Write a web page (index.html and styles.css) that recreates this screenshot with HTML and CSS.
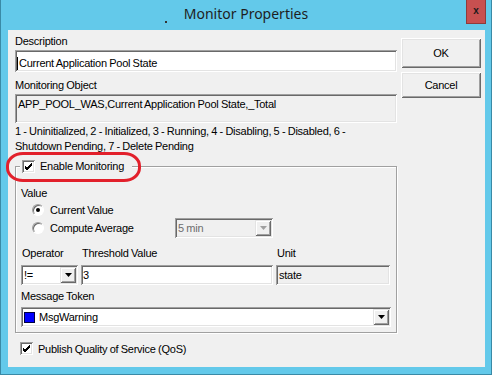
FILE: index.html
```html
<!DOCTYPE html>
<html lang="en">
<head>
  <meta charset="UTF-8" />
  <title>Monitor Properties</title>
  <link rel="stylesheet" href="styles.css">
</head>
<body>
  <div class="window">
    <div class="titlebar">
      <span class="app-dot"></span>
      <span class="title">Monitor Properties</span>
      <span class="close">x</span>
    </div>

    <div class="client">
      <div class="main">
        <div class="label">Description</div>
        <div class="field edit"><span class="caret"></span>Current Application Pool State</div>

        <div class="label second">Monitoring Object</div>
        <div class="field readonly tall">APP_POOL_WAS,Current Application Pool State,_Total</div>

        <p class="states">1 - Uninitialized, 2 - Initialized, 3 - Running, 4 - Disabling, 5 - Disabled, 6 -<br>Shutdown Pending, 7 - Delete Pending</p>

        <div class="group">
          <div class="group-head">
            <span class="check on">
              <svg width="13" height="13" viewBox="0 0 13 13"><path d="M3 6l2 2 5-5M3 7l2 2 5-5M3 8l2 2 5-5" fill="none" stroke="#000" stroke-width="1"/></svg>
            </span>
            <span>Enable Monitoring</span>
            <span class="mark"></span>
          </div>

          <div class="label value-label">Value</div>
          <div class="radio-row first">
            <span class="option"><span class="radio on"></span>Current Value</span>
          </div>
          <div class="radio-row">
            <span class="option"><span class="radio"></span>Compute Average</span>
            <div class="field combo disabled">
              <span class="combo-text">5 min</span>
              <span class="drop"><svg width="7" height="4" viewBox="0 0 7 4"><path d="M0 0h7L3.5 4z" fill="#a0a0a0"/></svg></span>
            </div>
          </div>

          <div class="threshold">
            <div class="label cell">Operator</div>
            <div class="label cell">Threshold Value</div>
            <div class="label cell">Unit</div>
            <div class="field combo">
              <span class="combo-text">!=</span>
              <span class="drop"><svg width="7" height="4" viewBox="0 0 7 4"><path d="M0 0h7L3.5 4z" fill="#000"/></svg></span>
            </div>
            <div class="field edit small">3</div>
            <div class="field readonly small">state</div>
          </div>

          <div class="label token-label">Message Token</div>
          <div class="field combo token">
            <span class="combo-text"><span class="swatch"></span>MsgWarning</span>
            <span class="drop"><svg width="7" height="4" viewBox="0 0 7 4"><path d="M0 0h7L3.5 4z" fill="#000"/></svg></span>
          </div>
        </div>

        <div class="qos">
          <span class="check on">
            <svg width="13" height="13" viewBox="0 0 13 13"><path d="M3 6l2 2 5-5M3 7l2 2 5-5M3 8l2 2 5-5" fill="none" stroke="#000" stroke-width="1"/></svg>
          </span>
          <span>Publish Quality of Service (QoS)</span>
        </div>
      </div>

      <div class="buttons">
        <div class="btn ok">OK</div>
        <div class="btn cancel">Cancel</div>
      </div>
    </div>
  </div>
</body>
</html>
```

FILE: styles.css
```css
* {
  box-sizing: border-box;
}

body {
  margin: 0;
  background: #fff;
  font-family: 'Liberation Sans', Arial, sans-serif;
  font-size: 11px;
  letter-spacing: -0.25px;
  word-spacing: -0.4px;
  color: #000;
}

.window {
  width: 492px;
  height: 375px;
  background: #63c9ea;
  border: 1px solid #3a8aa6;
  border-top: none;
  display: flex;
  flex-direction: column;
}

/* title bar */
.titlebar {
  height: 30px;
  display: grid;
  grid-template-columns: 1fr auto 1fr;
  align-items: start;
}

.app-dot {
  justify-self: end;
  width: 2px;
  height: 2px;
  margin: 21px 17px 0 0;
  background: #333;
}

.title {
  font-family: 'Noto Sans', sans-serif;
  font-size: 14px;
  letter-spacing: 0;
  word-spacing: 0;
  line-height: 28px;
  color: #1e1e1e;
}

.close {
  justify-self: end;
  width: 20px;
  height: 24px;
  margin-right: 5px;
  background: #c75050;
  border: 1px solid #8f3b3b;
  border-top: none;
  font-weight: bold;
  font-size: 10px;
  line-height: 22px;
  text-align: center;
  color: #1a1a1a;
}

/* client area */
.client {
  height: 337px;
  margin: 0 6px 0 7px;
  padding: 5px 4px 0 7px;
  background: #f0f0f0;
  display: flex;
  gap: 4px;
}

.main {
  width: 382px;
}

.label {
  height: 13px;
  line-height: 13px;
  margin-bottom: 2px;
}

.label.second {
  margin-top: 7px;
}

.field {
  box-shadow: inset 1px 1px #a0a0a0, inset -1px -1px #fff, inset 2px 2px #696969, inset -2px -2px #e3e3e3;
}

.edit {
  height: 22px;
  padding: 4px 3px 0 2px;
  line-height: 14px;
  background: #fff;
  display: flex;
  align-items: center;
}

.caret {
  width: 1px;
  height: 13px;
  background: #000;
  margin-right: 1px;
}

.readonly {
  background: #f0f0f0;
  padding: 0 3px;
}

.tall {
  height: 29px;
  padding-top: 3px;
  line-height: 14px;
}

.states {
  margin: 1px 0 0;
  line-height: 15px;
}

/* group box */
.group {
  margin-top: 12px;
  padding: 0 5px 5px 5px;
  border: 1px solid #a0a0a0;
  box-shadow: inset 1px 1px #fff, 1px 1px #fff;
}

.group-head {
  position: relative;
  display: flex;
  width: max-content;
  align-items: center;
  gap: 5px;
  height: 14px;
  margin: -8px 0 0 -1px;
  padding: 0 8px 0 2px;
  background: #f0f0f0;
}

/* red annotation drawn on the screenshot */
.mark {
  position: absolute;
  top: -7px;
  left: -14px;
  right: -9px;
  bottom: -9px;
  border: 3px solid #e2202b;
  border-radius: 17px / 14px;
}

.check {
  width: 13px;
  height: 13px;
  background: #fff;
  box-shadow: inset 1px 1px #a0a0a0, inset -1px -1px #fff, inset 2px 2px #696969, inset -2px -2px #e3e3e3;
}

.check svg {
  display: block;
}

.value-label {
  margin-top: 14px;
  margin-bottom: 1px;
}

.radio-row {
  height: 20px;
  display: flex;
  align-items: center;
  padding-left: 11px;
}

.radio-row.first {
  height: 17px;
}

.option {
  width: 143px;
  display: flex;
  align-items: center;
  gap: 6px;
}

.radio {
  position: relative;
  width: 12px;
  height: 12px;
  border-radius: 50%;
  background: #fff;
  border: 1px solid;
  border-color: #a0a0a0 #fff #fff #a0a0a0;
  box-shadow: inset 1px 1px #696969;
}

.radio.on::after {
  content: "";
  position: absolute;
  left: 3px;
  top: 3px;
  width: 4px;
  height: 4px;
  border-radius: 50%;
  background: #000;
}

.combo {
  height: 20px;
  display: flex;
  align-items: stretch;
  padding: 2px;
  background: #fff;
}

.combo.disabled {
  width: 98px;
  background: #f0f0f0;
  color: #6d6d6d;
}

.combo-text {
  flex: 1;
  display: flex;
  align-items: center;
  gap: 4px;
  padding-left: 1px;
}

.drop {
  width: 16px;
  display: flex;
  align-items: center;
  justify-content: center;
  background: #f0f0f0;
  box-shadow: inset 1px 1px #e3e3e3, inset -1px -1px #696969, inset 2px 2px #fff, inset -2px -2px #a0a0a0;
}

.threshold {
  margin-top: 9px;
  display: grid;
  grid-template-columns: 57px 192px 1fr;
  column-gap: 3px;
  row-gap: 5px;
  padding-right: 1px;
}

.threshold .label {
  margin: 0;
  padding-left: 1px;
}

.small {
  height: 20px;
  padding-top: 0;
  line-height: 20px;
}

.token-label {
  margin-top: 5px;
  margin-bottom: 4px;
}

.swatch {
  width: 11px;
  height: 11px;
  background: #0000ff;
  border: 1px solid #000040;
}

.qos {
  margin: 9px 0 0 5px;
  display: flex;
  align-items: center;
  gap: 5px;
}

/* buttons */
.buttons {
  width: 80px;
  padding-top: 3px;
  display: flex;
  flex-direction: column;
  gap: 4px;
}

.btn {
  height: 26px;
  display: flex;
  align-items: center;
  justify-content: center;
  background: #f0f0f0;
  box-shadow: inset 1px 1px #fff, inset -1px -1px #696969, inset 2px 2px #e3e3e3, inset -2px -2px #a0a0a0;
}

.btn.ok {
  height: 30px;
}
```
